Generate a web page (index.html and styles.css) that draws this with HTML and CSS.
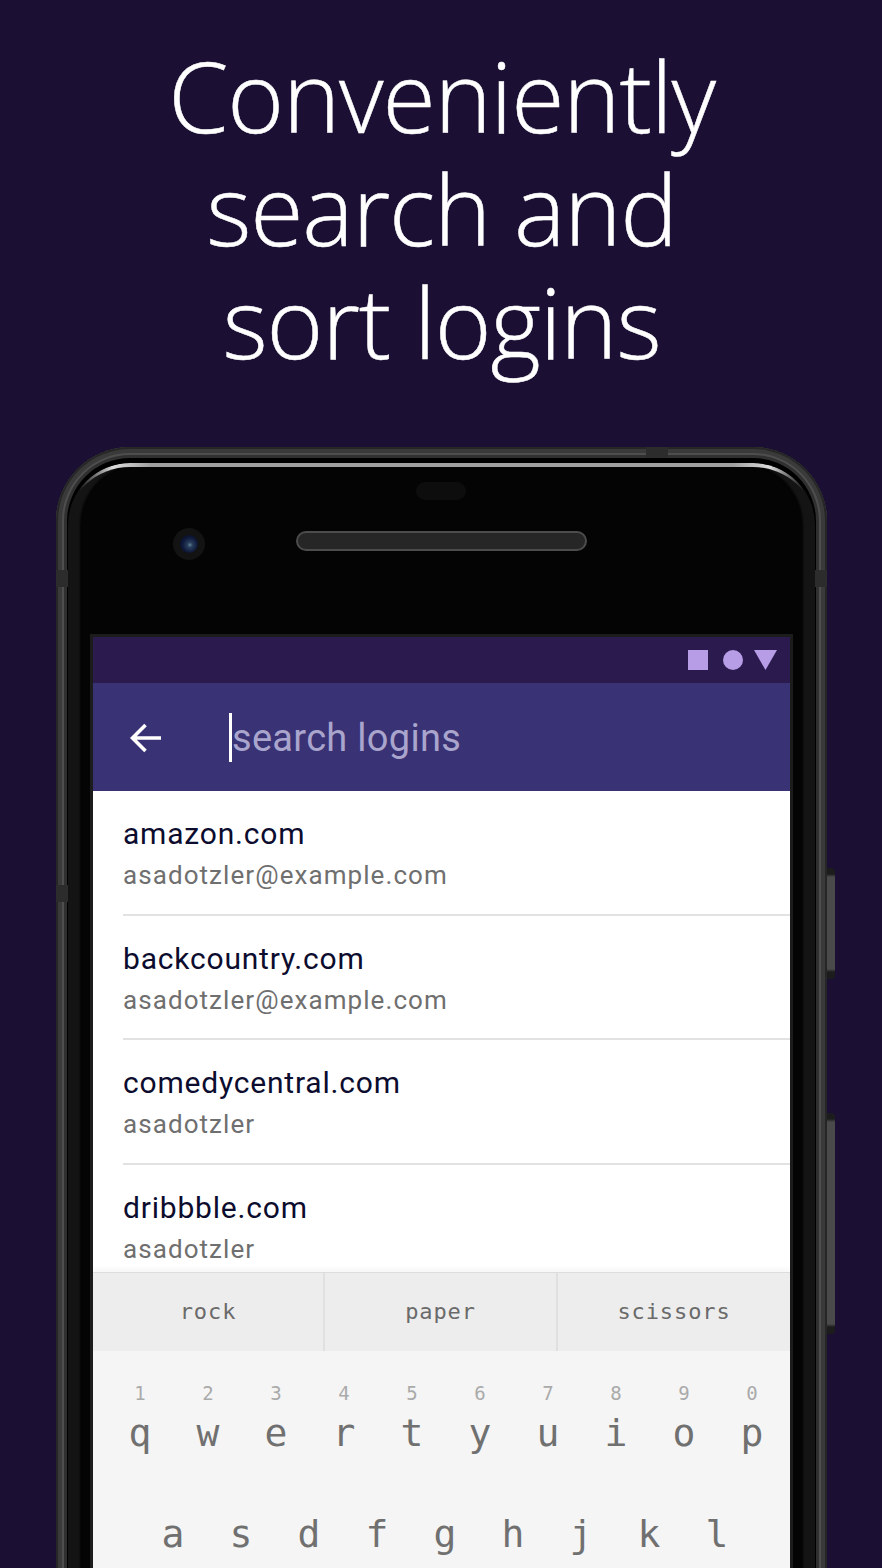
FILE: index.html
```html
<!DOCTYPE html>
<html lang="en">
<head>
<meta charset="utf-8">
<title>Conveniently search and sort logins</title>
<link rel="stylesheet" href="styles.css">
</head>
<body>
<div class="page">
  <h1 class="headline">Conveniently<br>search and<br>sort logins</h1>
  <div class="phone">
    <span class="notch notch-top"></span>
    <span class="notch notch-left"></span>
    <span class="notch notch-left-low"></span>
    <span class="notch notch-right"></span>
    <span class="side-btn side-btn-power"></span>
    <span class="side-btn side-btn-volume"></span>
    <div class="bezel">
      <div class="sensor"></div>
      <div class="earpiece-row">
        <div class="camera"><div class="lens"></div></div>
        <div class="speaker"></div>
      </div>
      <div class="screen">
        <div class="status-bar">
          <svg class="status-icons" width="90" height="20" viewBox="0 0 90 20"><rect x="0" y="0" width="20" height="20"/><circle cx="45" cy="10" r="10"/><path d="M66 0h23L77.5 20z"/></svg>
        </div>
        <div class="toolbar">
          <svg class="back" width="32" height="30" viewBox="0 0 32 30"><path d="M31 15H3M15.500 2 2.500 15l13 13" fill="none" stroke="#fff" stroke-width="3.600"/></svg>
          <div class="search"><span class="caret"></span><span class="placeholder">search logins</span></div>
        </div>
        <ul class="list">
          <li class="row"><div class="site">amazon.com</div><div class="user">asadotzler@example.com</div></li>
          <li class="row"><div class="site">backcountry.com</div><div class="user">asadotzler@example.com</div></li>
          <li class="row"><div class="site">comedycentral.com</div><div class="user">asadotzler</div></li>
          <li class="row"><div class="site">dribbble.com</div><div class="user">asadotzler</div></li>
        </ul>
        <div class="suggestions">
          <div class="suggestion">rock</div>
          <div class="suggestion">paper</div>
          <div class="suggestion">scissors</div>
        </div>
        <div class="keyboard">
          <div class="keys keys-top">
            <div class="key"><small>1</small>q</div>
            <div class="key"><small>2</small>w</div>
            <div class="key"><small>3</small>e</div>
            <div class="key"><small>4</small>r</div>
            <div class="key"><small>5</small>t</div>
            <div class="key"><small>6</small>y</div>
            <div class="key"><small>7</small>u</div>
            <div class="key"><small>8</small>i</div>
            <div class="key"><small>9</small>o</div>
            <div class="key"><small>0</small>p</div>
          </div>
          <div class="keys keys-mid">
            <div class="key">a</div>
            <div class="key">s</div>
            <div class="key">d</div>
            <div class="key">f</div>
            <div class="key">g</div>
            <div class="key">h</div>
            <div class="key">j</div>
            <div class="key">k</div>
            <div class="key">l</div>
          </div>
        </div>
      </div>
    </div>
  </div>
</div>
</body>
</html>
```
FILE: styles.css
```css
* { box-sizing: border-box; }
html, body { margin: 0; padding: 0; }
body { background: #1b0f33; }
.page {
  height: 1568px;
  overflow: hidden;
  padding-top: 39px;
}
.headline {
  margin: 0;
  font-family: "Open Sans", sans-serif;
  font-weight: 300;
  font-size: 97px;
  line-height: 113px;
  color: #fff;
  text-align: center;
  padding-left: 1px;
  height: 408px;
  letter-spacing: -1.2px;
  -webkit-text-stroke: .5px #fff;
}
.phone {
  position: relative;
  width: 771px;
  height: 1300px;
  margin-left: 56px;
  padding: 16px 12px 0;
  border-radius: 74px 74px 0 0;
  background: #000;
  box-shadow: inset 0 0 0 2px #262626, inset 0 0 0 6px #3a3a3a, inset 0 0 0 8px #4e4e4e, inset 0 0 0 11px #303030;
}
.notch { position: absolute; background: #2c2c2c; }
.notch-top { left: 590px; top: 0; width: 22px; height: 11px; }
.notch-left { left: 0; top: 123px; width: 12px; height: 17px; }
.notch-left-low { left: 0; top: 438px; width: 12px; height: 17px; }
.notch-right { right: 0; top: 123px; width: 12px; height: 17px; }
.side-btn {
  position: absolute;
  left: 771px;
  width: 8px;
  border-radius: 0 4px 4px 0;
  background: linear-gradient(180deg, #1c1c1c 0, #1c1c1c 6px, #4a4a4a 9px, #4a4a4a calc(100% - 10px), #1c1c1c calc(100% - 7px));
}
.side-btn-power { top: 421px; height: 111px; }
.side-btn-volume { top: 666px; height: 221px; }
.bezel {
  position: relative;
  height: 1284px;
  padding-top: 20px;
  border-radius: 62px 62px 0 0;
  background: #040404;
  box-shadow: inset 12px 0 2px 0 #141414, inset -12px 0 2px 0 #141414;
}
.bezel::before {
  content: "";
  position: absolute;
  left: 0;
  right: 0;
  top: 0;
  height: 80px;
  border-top: 4px solid transparent;
  border-radius: 62px 62px 0 0;
  background: linear-gradient(90deg, transparent 1.5%, #ddd 6%, #a0a0a0 11%, #a0a0a0 89%, #ddd 94%, transparent 98.5%) border-box;
  -webkit-mask: linear-gradient(#000 0 0) padding-box, linear-gradient(#000 0 0);
  -webkit-mask-composite: xor;
  mask-composite: exclude;
}
.sensor {
  width: 50px;
  height: 18px;
  margin: -1px 0 0 348px;
  border-radius: 9px;
  background: #0d0d0d;
}
.earpiece-row {
  display: flex;
  align-items: flex-start;
  margin: 28px 0 0 105px;
  height: 106px;
}
.camera {
  display: flex;
  align-items: center;
  justify-content: center;
  width: 32px;
  height: 32px;
  border-radius: 50%;
  background: #131313;
}
.lens {
  width: 18px;
  height: 18px;
  border-radius: 50%;
  background: radial-gradient(circle at 55% 55%, #5d8296 0, #2a3d5c 18%, #0d1738 55%, #060a1c 100%);
}
.speaker {
  width: 291px;
  height: 20px;
  margin: 3px 0 0 91px;
  border-radius: 10px;
  border: 2px solid #4c4c4c;
  background: radial-gradient(circle, #262626 0, #262626 50%, #0a0a0a 51%) 0 0 / 2px 2px;
}
.screen {
  width: 703px;
  margin-left: 22px;
  border: 3px solid #1c1c1c;
  border-bottom: 0;
  font-family: Roboto, sans-serif;
}
.status-bar {
  display: flex;
  justify-content: flex-end;
  align-items: flex-start;
  height: 46px;
  padding: 13px 12px 0 0;
  background: #2a1a4e;
}
.status-icons { fill: #b79ce6; }
.toolbar {
  display: flex;
  align-items: center;
  height: 108px;
  padding: 1px 0 0 37px;
  background: #393274;
}
.back { flex: none; }
.search {
  display: flex;
  align-items: center;
  margin-left: 67px;
}
.caret {
  width: 3px;
  height: 49px;
  background: #fff;
}
.placeholder {
  font-size: 38px;
  letter-spacing: .3px;
  color: #a9a5cd;
}
.list {
  height: 481px;
  margin: 0;
  padding: 0;
  overflow: hidden;
  list-style: none;
  background: #fff;
}
.row {
  height: 124.500px;
  margin-left: 30px;
  padding-top: 25px;
  border-bottom: 2px solid #e2e2e2;
}
.row:last-child { border-bottom: 0; }
.site {
  font-size: 30px;
  line-height: 36px;
  letter-spacing: .8px;
  color: #0c0c2e;
}
.user {
  margin-top: 7px;
  font-size: 26px;
  line-height: 32px;
  letter-spacing: 1.07px;
  color: #6f6f6f;
}
.suggestions {
  position: relative;
  display: grid;
  grid-template-columns: 232px 233px 1fr;
  height: 79px;
  background: #ededed;
  border-top: 1px solid #ddd;
  box-shadow: 0 -4px 4px rgba(0, 0, 0, .03);
}
.suggestion {
  display: flex;
  align-items: center;
  justify-content: center;
  padding-bottom: 2px;
  border-right: 2px solid #e0e0e0;
  font-family: "DejaVu Sans Mono", monospace;
  font-size: 22px;
  letter-spacing: .9px;
  color: #6a6a6a;
}
.suggestion:last-child { border-right: 0; }
.keyboard {
  height: 260px;
  background: #f5f5f5;
  font-family: "DejaVu Sans Mono", monospace;
  color: #707070;
}
.keys {
  display: grid;
  grid-auto-flow: column;
  grid-auto-columns: 68px;
}
.keys-top { padding: 31px 0 0 13px; height: 161px; }
.keys-mid { padding: 0 0 0 46px; }
.key {
  display: flex;
  flex-direction: column;
  align-items: center;
  font-size: 38px;
  line-height: 44px;
}
.key small {
  margin-bottom: 7px;
  font-size: 19px;
  line-height: 22px;
  color: #aaa;
}
```
